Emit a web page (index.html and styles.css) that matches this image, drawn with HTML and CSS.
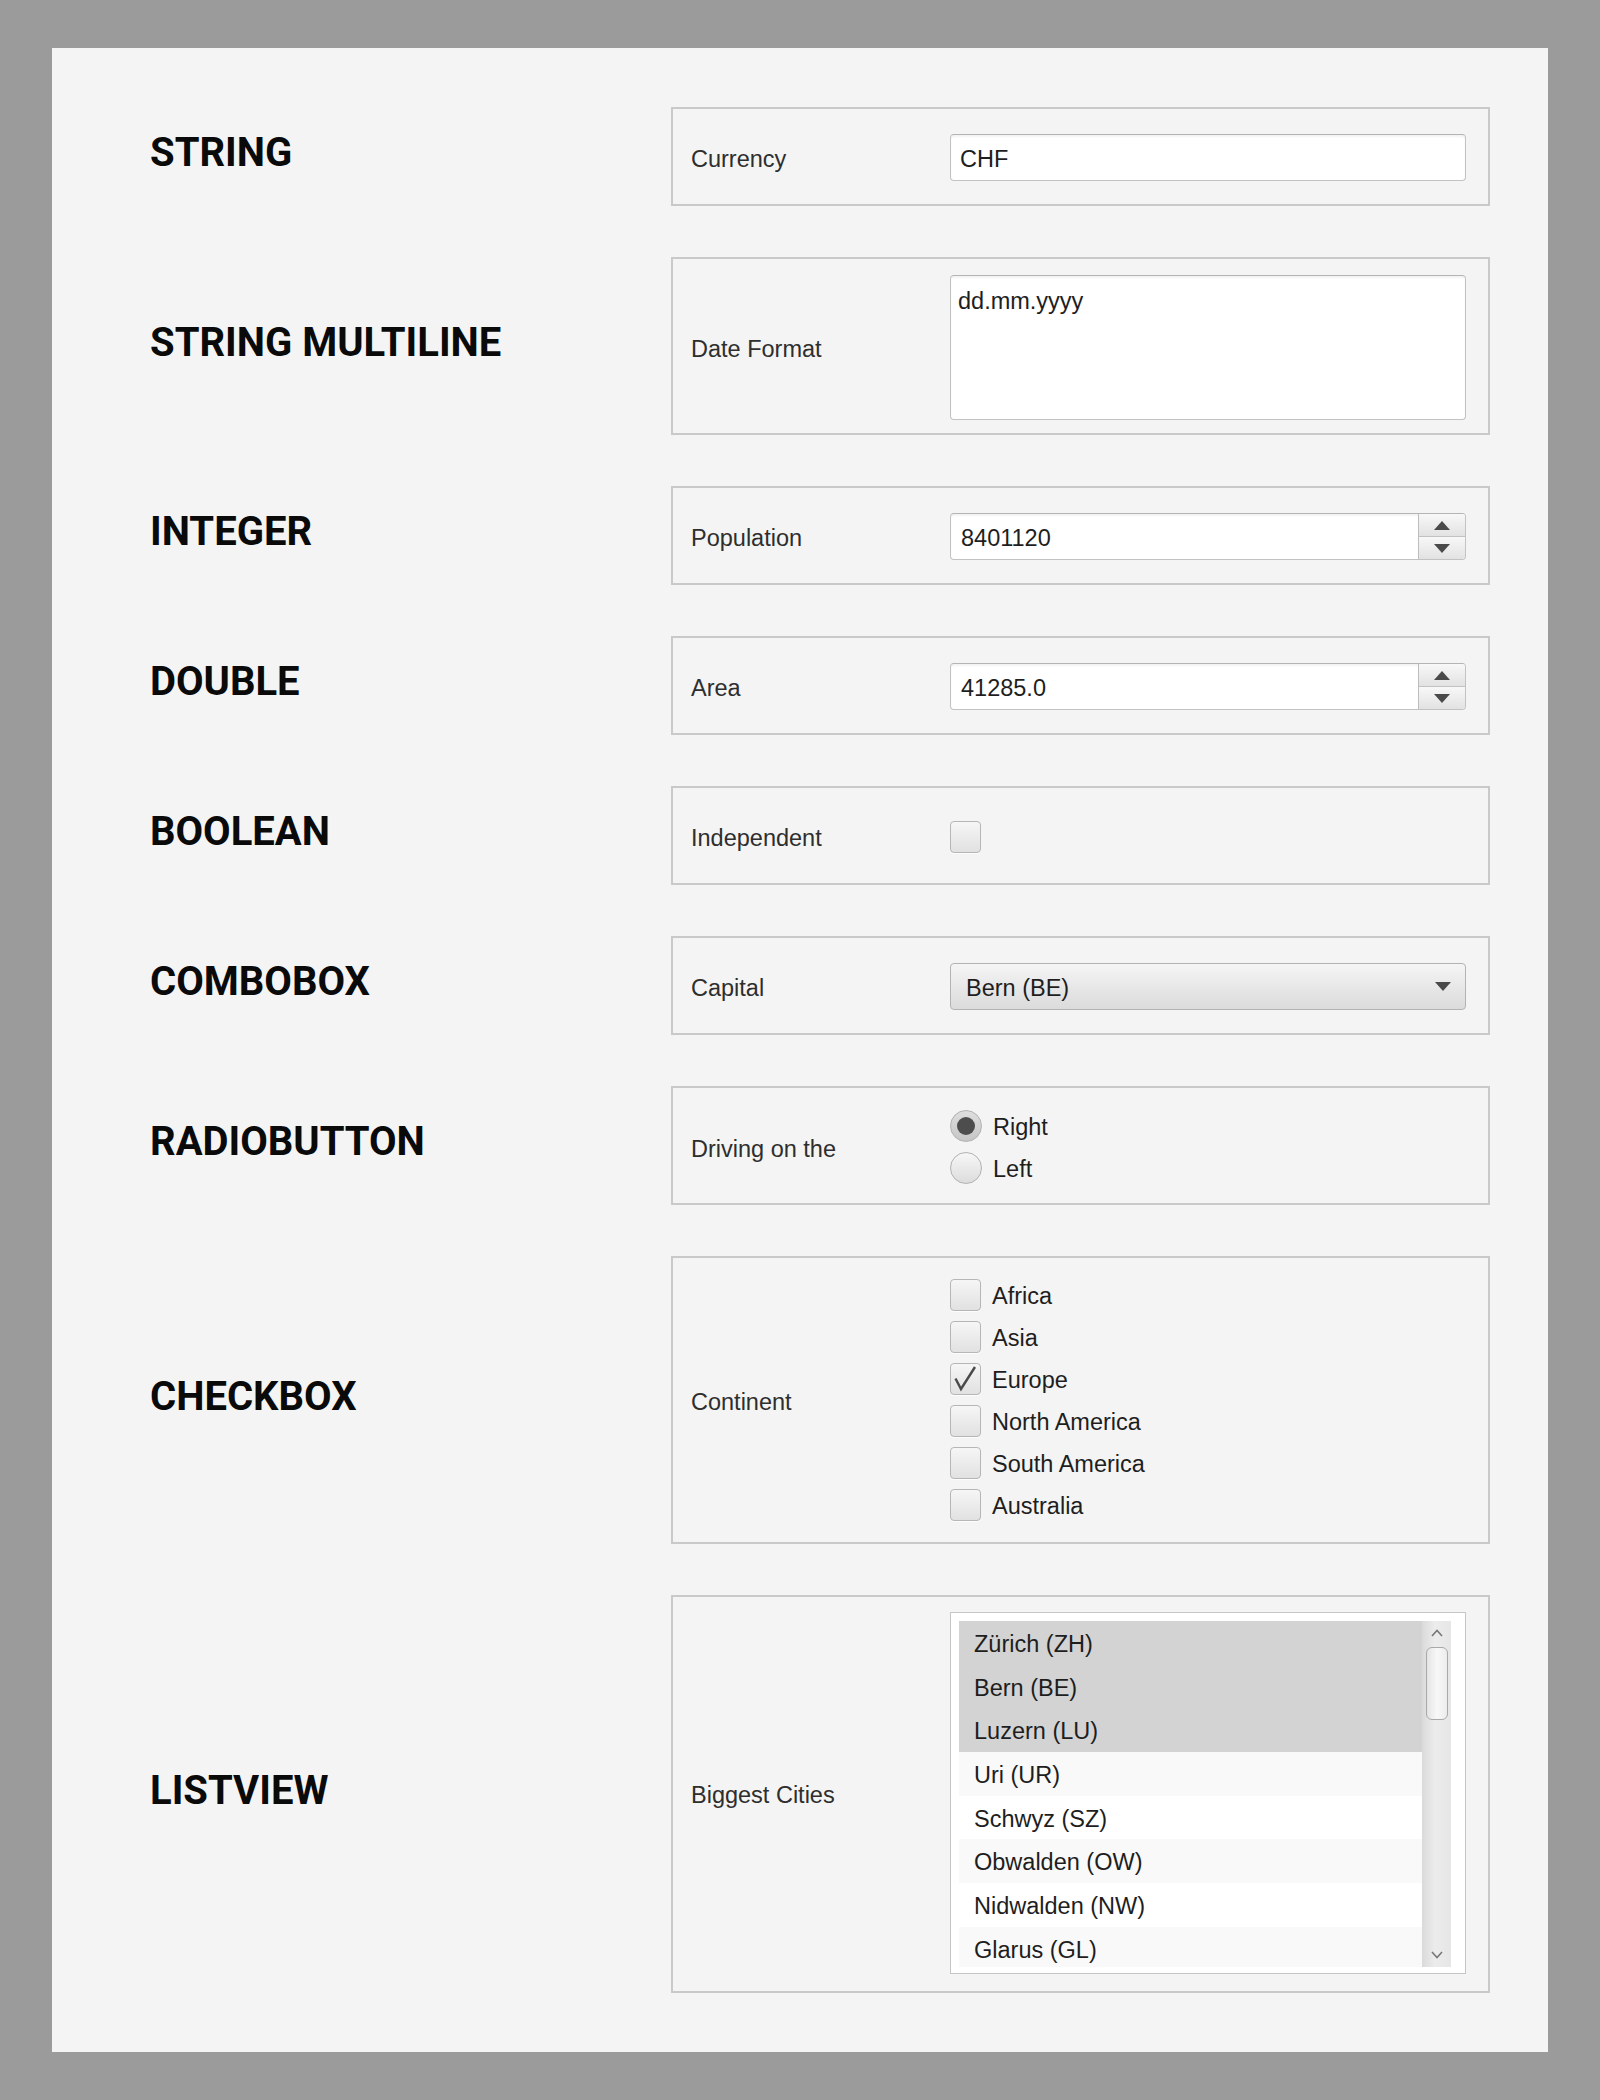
FILE: index.html
```html
<!DOCTYPE html>
<html lang="de">
<head>
<meta charset="utf-8">
<title>Form Types</title>
<link rel="stylesheet" href="styles.css">
</head>
<body>
<div class="panel">

  <div class="row">
    <h2 class="type">STRING</h2>
    <div class="box">
      <span class="label">Currency</span>
      <div class="field">CHF</div>
    </div>
  </div>

  <div class="row">
    <h2 class="type">STRING MULTILINE</h2>
    <div class="box box-multi">
      <span class="label">Date Format</span>
      <div class="field textarea">dd.mm.yyyy</div>
    </div>
  </div>

  <div class="row">
    <h2 class="type">INTEGER</h2>
    <div class="box">
      <span class="label">Population</span>
      <div class="field spinner">
        <span class="spin-value">8401120</span>
        <span class="spin-buttons">
          <span class="spin-btn"><span class="tri-up"></span></span>
          <span class="spin-btn"><span class="tri-down"></span></span>
        </span>
      </div>
    </div>
  </div>

  <div class="row">
    <h2 class="type">DOUBLE</h2>
    <div class="box">
      <span class="label">Area</span>
      <div class="field spinner">
        <span class="spin-value">41285.0</span>
        <span class="spin-buttons">
          <span class="spin-btn"><span class="tri-up"></span></span>
          <span class="spin-btn"><span class="tri-down"></span></span>
        </span>
      </div>
    </div>
  </div>

  <div class="row">
    <h2 class="type">BOOLEAN</h2>
    <div class="box">
      <span class="label">Independent</span>
      <div class="bool-wrap"><span class="check"></span></div>
    </div>
  </div>

  <div class="row">
    <h2 class="type">COMBOBOX</h2>
    <div class="box">
      <span class="label">Capital</span>
      <div class="combo"><span class="combo-text">Bern (BE)</span><span class="tri-down"></span></div>
    </div>
  </div>

  <div class="row">
    <h2 class="type">RADIOBUTTON</h2>
    <div class="box box-radio">
      <span class="label">Driving on the</span>
      <div class="options">
        <div class="option"><span class="radio selected"><span class="dot"></span></span><span class="opt-text">Right</span></div>
        <div class="option"><span class="radio"></span><span class="opt-text">Left</span></div>
      </div>
    </div>
  </div>

  <div class="row">
    <h2 class="type">CHECKBOX</h2>
    <div class="box box-check">
      <span class="label">Continent</span>
      <div class="options">
        <div class="option"><span class="check"></span><span class="opt-text">Africa</span></div>
        <div class="option"><span class="check"></span><span class="opt-text">Asia</span></div>
        <div class="option"><span class="check"><svg width="31" height="31" viewBox="0 0 31 31"><path d="M5.5 15.5 L11 26 L25 4" fill="none" stroke="#4a4a4a" stroke-width="2.4" stroke-linejoin="miter"/></svg></span><span class="opt-text">Europe</span></div>
        <div class="option"><span class="check"></span><span class="opt-text">North America</span></div>
        <div class="option"><span class="check"></span><span class="opt-text">South America</span></div>
        <div class="option"><span class="check"></span><span class="opt-text">Australia</span></div>
      </div>
    </div>
  </div>

  <div class="row">
    <h2 class="type">LISTVIEW</h2>
    <div class="box box-list">
      <span class="label">Biggest Cities</span>
      <div class="list">
        <div class="rows">
          <div class="item sel">Zürich (ZH)</div>
          <div class="item sel">Bern (BE)</div>
          <div class="item sel">Luzern (LU)</div>
          <div class="item odd">Uri (UR)</div>
          <div class="item">Schwyz (SZ)</div>
          <div class="item odd">Obwalden (OW)</div>
          <div class="item">Nidwalden (NW)</div>
          <div class="item odd">Glarus (GL)</div>
        </div>
        <div class="scrollbar">
          <span class="sb-arrow"><svg width="12" height="8" viewBox="0 0 12 8"><path d="M1 7 L6 1.5 L11 7" fill="none" stroke="#777" stroke-width="1.6"/></svg></span>
          <span class="thumb"></span>
          <span class="sb-fill"></span>
          <span class="sb-arrow"><svg width="12" height="8" viewBox="0 0 12 8"><path d="M1 1 L6 6.5 L11 1" fill="none" stroke="#777" stroke-width="1.6"/></svg></span>
        </div>
      </div>
    </div>
  </div>

</div>
</body>
</html>
```

FILE: styles.css
```css
html, body {
  margin: 0;
  padding: 0;
}

body {
  background: #9b9b9b;
  font-family: "Liberation Sans", Arial, sans-serif;
  min-height: 2100px;
}

.panel {
  box-sizing: border-box;
  width: 1496px;
  height: 2004px;
  margin: 48px 0 0 52px;
  background: #f4f4f4;
  padding: 59px 58px 59px 98px;
  display: flex;
  flex-direction: column;
  gap: 51px;
}

.row {
  display: grid;
  grid-template-columns: 521px 819px;
  align-items: center;
}

.type {
  margin: 0 0 8px 0;
  font-family: Roboto, "Liberation Sans", sans-serif;
  font-weight: 700;
  font-size: 40px;
  color: #0a0a0a;
  letter-spacing: 0;
}

.box {
  border: 2px solid #c9c9c9;
  display: grid;
  grid-template-columns: 259px 516px;
  align-items: center;
  padding: 25px 22px 23px 18px;
}

.box-multi {
  padding-top: 16px;
  padding-bottom: 13px;
}

.box-radio {
  padding-top: 22px;
  padding-bottom: 19px;
}

.box-check {
  padding-top: 21px;
  padding-bottom: 21px;
}

.box-list {
  padding-top: 15px;
  padding-bottom: 17px;
}

.label {
  font-size: 23.5px;
  color: #2e2e2e;
  padding-top: 4px;
}

.field {
  box-sizing: border-box;
  height: 47px;
  background: #fff;
  border: 1px solid #c2c2c2;
  border-top-color: #b4b4b4;
  border-radius: 4px;
  box-shadow: inset 0 2px 2px rgba(0, 0, 0, 0.05);
  display: flex;
  align-items: center;
  padding: 3px 9px 0;
  font-size: 23.5px;
  color: #1e1e1e;
}

.textarea {
  height: 145px;
  align-items: flex-start;
  padding: 12px 7px;
}

.spinner {
  padding: 0 0 0 10px;
  overflow: hidden;
}

.spin-value {
  flex: 1;
  padding-top: 3px;
}

.spin-buttons {
  width: 46px;
  align-self: stretch;
  display: flex;
  flex-direction: column;
  border-left: 1px solid #bdbdbd;
}

.spin-btn {
  flex: 1;
  display: flex;
  align-items: center;
  justify-content: center;
  background: linear-gradient(#f8f8f8, #e2e2e2);
}

.spin-btn + .spin-btn {
  border-top: 1px solid #c2c2c2;
}

.tri-up {
  width: 0;
  height: 0;
  border-left: 8px solid transparent;
  border-right: 8px solid transparent;
  border-bottom: 9px solid #4a4a4a;
}

.tri-down {
  width: 0;
  height: 0;
  border-left: 8px solid transparent;
  border-right: 8px solid transparent;
  border-top: 9px solid #4a4a4a;
}

.bool-wrap {
  display: flex;
  align-items: center;
  height: 47px;
}

.check {
  box-sizing: border-box;
  display: inline-block;
  flex: none;
  width: 31px;
  height: 32px;
  border: 1px solid #b6b6b6;
  border-radius: 4px;
  background: linear-gradient(#f6f6f6, #e1e1e1);
  box-shadow: 0 1px 0 rgba(255, 255, 255, 0.8);
}

.check svg {
  display: block;
  margin: -1px 0 0 -1px;
}

.combo {
  box-sizing: border-box;
  height: 47px;
  border: 1px solid #b3b3b3;
  border-radius: 4px;
  background: linear-gradient(#f5f5f5, #dbdbdb);
  display: flex;
  align-items: center;
  justify-content: space-between;
  padding: 0 14px 0 15px;
  font-size: 23.5px;
  color: #1e1e1e;
}

.combo-text {
  padding-top: 3px;
}

.options {
  display: flex;
  flex-direction: column;
  gap: 10px;
}

.option {
  display: flex;
  align-items: center;
  gap: 10px;
  height: 32px;
  font-size: 23.5px;
  color: #1e1e1e;
}

.opt-text {
  padding-top: 3px;
  margin-left: 1px;
}

.radio {
  box-sizing: border-box;
  flex: none;
  width: 32px;
  height: 32px;
  border-radius: 50%;
  border: 1px solid #b2b2b2;
  background: linear-gradient(#f7f7f7, #dcdcdc);
  display: flex;
  align-items: center;
  justify-content: center;
}

.radio.selected {
  background: linear-gradient(#dedede, #c6c6c6);
}

.dot {
  width: 18px;
  height: 18px;
  border-radius: 50%;
  background: #4d4d4d;
}

.list {
  box-sizing: border-box;
  height: 362px;
  border: 1px solid #c6c6c6;
  background: #fff;
  padding: 8px 14px 6px 8px;
  display: flex;
}

.rows {
  flex: 1;
  overflow: hidden;
}

.item {
  box-sizing: border-box;
  height: 43.7px;
  line-height: 41px;
  padding: 3px 15px 0;
  font-size: 23.5px;
  color: #1e1e1e;
  background: #fff;
  white-space: nowrap;
}

.item.odd {
  background: #f9f9f9;
}

.item.sel {
  background: #d3d3d3;
}

.scrollbar {
  width: 29px;
  display: flex;
  flex-direction: column;
  align-items: center;
  background: linear-gradient(to right, #dadada, #ececec 45%, #e6e6e6);
}

.sb-arrow {
  height: 24px;
  display: flex;
  align-items: center;
  justify-content: center;
}

.thumb {
  box-sizing: border-box;
  width: 22px;
  height: 73px;
  margin-top: 2px;
  border: 1px solid #a9a9a9;
  border-radius: 6px;
  background: linear-gradient(to right, #e4e4e4, #f8f8f8 50%, #ececec);
}

.sb-fill {
  flex: 1;
}
```
